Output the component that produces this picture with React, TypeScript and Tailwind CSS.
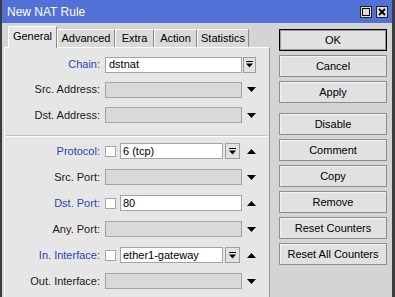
const blue = 'text-[#2848b0]';

function DropBtn({ w = 13 }: { w?: number }) {
  return (
    <div
      className={`h-[16px] ${w === 13 ? 'w-[13px]' : 'w-[15px]'} flex items-center justify-center border border-[#9c9c9c] bg-[#e2e2e2]`}
    >
      <svg width="7" height="7" viewBox="0 0 7 7">
        <rect x="0" y="0" width="7" height="1" fill="#000" />
        <path d="M0 2.5 L7 2.5 L3.5 6.5 Z" fill="#000" />
      </svg>
    </div>
  );
}

function Arrow({ up }: { up?: boolean }) {
  return (
    <svg width="9" height="5" viewBox="0 0 9 5">
      <path d={up ? 'M0 5 L9 5 L4.5 0 Z' : 'M0 0 L9 0 L4.5 5 Z'} fill="#000" />
    </svg>
  );
}

function Check() {
  return <div className="h-[11px] w-[11px] shrink-0 border border-[#a6a6a6] bg-white" />;
}

type Kind = 'chain' | 'empty' | 'combo' | 'text';

function Row({
  label,
  active,
  kind,
  value,
  arrow,
  h = 'h-[26px]',
}: {
  label: string;
  active?: boolean;
  kind: Kind;
  value?: string;
  arrow?: 'up' | 'down';
  h?: string;
}) {
  return (
    <div className={`flex ${h} items-center`}>
      <div className={`w-[95px] text-right ${active ? blue : 'text-[#1a1a1a]'}`}>{label}</div>
      <div className="ml-[5px] flex w-[137px] items-center">
        {kind === 'empty' && <div className="h-[16px] w-[137px] border border-[#a4a4a4] bg-[#d9d9d9]" />}
        {kind === 'chain' && (
          <div className="flex h-[16px] w-[137px] items-center border border-[#a4a4a4] bg-white pl-[3px]">{value}</div>
        )}
        {kind === 'combo' && (
          <>
            <Check />
            <div className="ml-[4px] flex h-[16px] w-[103px] items-center border border-[#a4a4a4] bg-white pl-[2px]">
              {value}
            </div>
            <div className="ml-[2px]">
              <DropBtn w={15} />
            </div>
          </>
        )}
        {kind === 'text' && (
          <>
            <Check />
            <div className="ml-[4px] flex h-[16px] w-[122px] items-center border border-[#a4a4a4] bg-white pl-[2px]">
              {value}
            </div>
          </>
        )}
      </div>
      <div className="flex w-[17px] items-center justify-center">
        {kind === 'chain' ? (
          <div className="-ml-[2px]">
            <DropBtn />
          </div>
        ) : arrow ? (
          <div className="ml-[1px]">
            <Arrow up={arrow === 'up'} />
          </div>
        ) : null}
      </div>
    </div>
  );
}

const tabs = [
  { name: 'General', w: 'w-[49px]' },
  { name: 'Advanced', w: 'w-[58px]' },
  { name: 'Extra', w: 'w-[39px]' },
  { name: 'Action', w: 'w-[43px]' },
  { name: 'Statistics', w: 'w-[52px]' },
];

function Btn({ children, def }: { children: string; def?: boolean }) {
  return (
    <div
      className={`flex h-[22px] w-[108px] items-center justify-center bg-[#e1e1e1] ${
        def ? 'border border-black shadow-[inset_0_0_0_1px_#9a9a9a]' : 'border border-[#8e8e8e] shadow-[inset_1px_1px_0_#f4f4f4]'
      }`}
    >
      {children}
    </div>
  );
}

export default function App() {
  return (
    <div className="flex h-[297px] w-[395px] flex-col overflow-hidden border-r-[3px] border-l-2 border-[#3c3c3c] bg-[#d4d4d4] font-['Liberation_Sans',Arial,sans-serif] text-[11px] text-black">
      {/* title bar */}
      <div className="flex h-[23px] shrink-0 items-center justify-between bg-[#5270d6] pl-[5px] pr-[4px]">
        <span className="text-[12px] text-white">New NAT Rule</span>
        <div className="flex gap-[4px]">
          <div className="flex h-[12px] w-[12px] items-center justify-center border border-[#222] bg-[#dcdcdc]">
            <div className="h-[8px] w-[8px] border border-[#111]" />
          </div>
          <div className="flex h-[12px] w-[12px] items-center justify-center border border-[#222] bg-[#dcdcdc]">
            <svg width="8" height="8" viewBox="0 0 8 8">
              <path d="M1 1 L7 7 M7 1 L1 7" stroke="#000" strokeWidth="1.8" />
            </svg>
          </div>
        </div>
      </div>

      <div className="flex min-h-0 flex-1">
        {/* left side: tabs + panel */}
        <div className="flex w-[268px] flex-col pl-[2px]">
          <div className="flex h-[24px] shrink-0 items-end pl-[4px]">
            {tabs.map((t, i) =>
              i === 0 ? (
                <div
                  key={t.name}
                  className={`relative z-10 -mb-px flex h-[22px] ${t.w} items-center justify-center border-t border-l border-white border-r border-r-[#8a8a8a] bg-[#e6e6e6] pb-[2px]`}
                >
                  {t.name}
                </div>
              ) : (
                <div
                  key={t.name}
                  className={`flex h-[18px] ${t.w} items-center justify-center border-t border-l border-white border-r border-r-[#8a8a8a] bg-[#dadada]`}
                >
                  {t.name}
                </div>
              ),
            )}
          </div>
          <div className="flex-1 border-t border-l border-white border-r border-r-[#9a9a9a] bg-[#e6e6e6] pt-[4px]">
            <Row label="Chain:" active kind="chain" value="dstnat" h="h-[25px]" />
            <Row label="Src. Address:" kind="empty" arrow="down" h="h-[25px]" />
            <Row label="Dst. Address:" kind="empty" arrow="down" />
            <div className="pt-[7px] pb-[1px]">
              <div className="mx-[1px] h-[2px] border-t border-[#c4c4c4] border-b border-b-white" />
            </div>
            <Row label="Protocol:" active kind="combo" value="6 (tcp)" arrow="up" />
            <Row label="Src. Port:" kind="empty" arrow="down" />
            <Row label="Dst. Port:" active kind="text" value="80" arrow="up" />
            <Row label="Any. Port:" kind="empty" arrow="down" />
            <Row label="In. Interface:" active kind="combo" value="ether1-gateway" arrow="up" />
            <Row label="Out. Interface:" kind="empty" arrow="down" />
          </div>
        </div>

        {/* right side: buttons */}
        <div className="flex flex-col gap-[4px] pt-[6px] pl-[9px]">
          <Btn def>OK</Btn>
          <Btn>Cancel</Btn>
          <Btn>Apply</Btn>
          <div className="mt-[6px]">
            <Btn>Disable</Btn>
          </div>
          <Btn>Comment</Btn>
          <Btn>Copy</Btn>
          <Btn>Remove</Btn>
          <Btn>Reset Counters</Btn>
          <Btn>Reset All Counters</Btn>
        </div>
      </div>
    </div>
  );
}
